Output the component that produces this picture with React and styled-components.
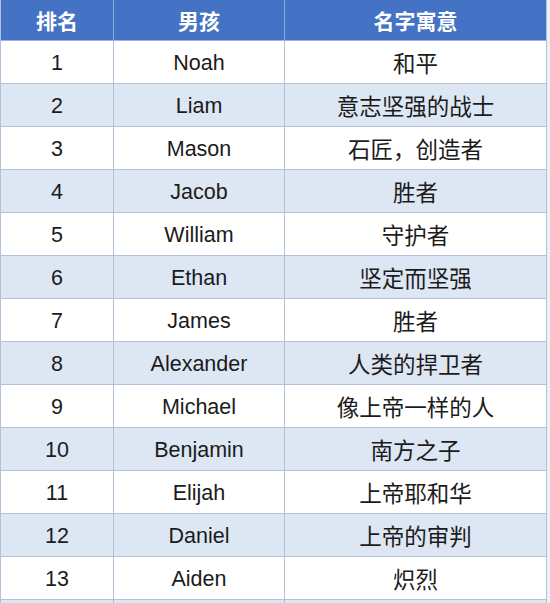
import React from "react";
import styled, { createGlobalStyle } from "styled-components";

const rows = [
  ["1", "Noah", "和平"],
  ["2", "Liam", "意志坚强的战士"],
  ["3", "Mason", "石匠，创造者"],
  ["4", "Jacob", "胜者"],
  ["5", "William", "守护者"],
  ["6", "Ethan", "坚定而坚强"],
  ["7", "James", "胜者"],
  ["8", "Alexander", "人类的捍卫者"],
  ["9", "Michael", "像上帝一样的人"],
  ["10", "Benjamin", "南方之子"],
  ["11", "Elijah", "上帝耶和华"],
  ["12", "Daniel", "上帝的审判"],
  ["13", "Aiden", "炽烈"],
  ["", "", ""],
];

const GlobalStyle = createGlobalStyle`
  body {
    margin: 0;
    background: #eef0f4;
    font-family: "Liberation Sans", "Noto Sans CJK SC", sans-serif;
  }
`;

const Table = styled.div`
  width: 547px;
  background: #fff;
`;

const Row = styled.div`
  display: grid;
  grid-template-columns: 112px 171px 1fr;
  height: ${(p) => (p.$head ? "40px" : "42px")};
  background: ${(p) => (p.$head ? "#4472c4" : p.$shade ? "#dde6f3" : "#ffffff")};
  border-bottom: 1px solid ${(p) => (p.$head ? "#9db3dc" : "#b3c0d9")};
  border-left: 1px solid #b3c0d9;
  border-right: 1px solid #b3c0d9;
`;

const Cell = styled.div`
  display: flex;
  align-items: center;
  justify-content: center;
  color: #1b1b1b;
  font-size: 21.5px;
  padding-top: 3px;
  border-left: 1px solid #b3c0d9;

  &:first-child {
    border-left: none;
  }
`;

const CjkCell = styled(Cell)`
  font-family: "Noto Sans CJK SC", sans-serif;
  font-size: 22.5px;
  padding-top: 0;
`;

const HeadCell = styled(CjkCell)`
  font-size: 21px;
  font-weight: 700;
  color: #ffffff;
  border-left-color: #8fa9d8;
`;

export default function App() {
  return (
    <>
      <GlobalStyle />
      <Table>
        <Row $head>
          <HeadCell>排名</HeadCell>
          <HeadCell>男孩</HeadCell>
          <HeadCell>名字寓意</HeadCell>
        </Row>
        {rows.map((r, i) => (
          <Row key={i} $shade={i % 2 === 1}>
            <Cell>{r[0]}</Cell>
            <Cell>{r[1]}</Cell>
            <CjkCell>{r[2]}</CjkCell>
          </Row>
        ))}
      </Table>
    </>
  );
}
